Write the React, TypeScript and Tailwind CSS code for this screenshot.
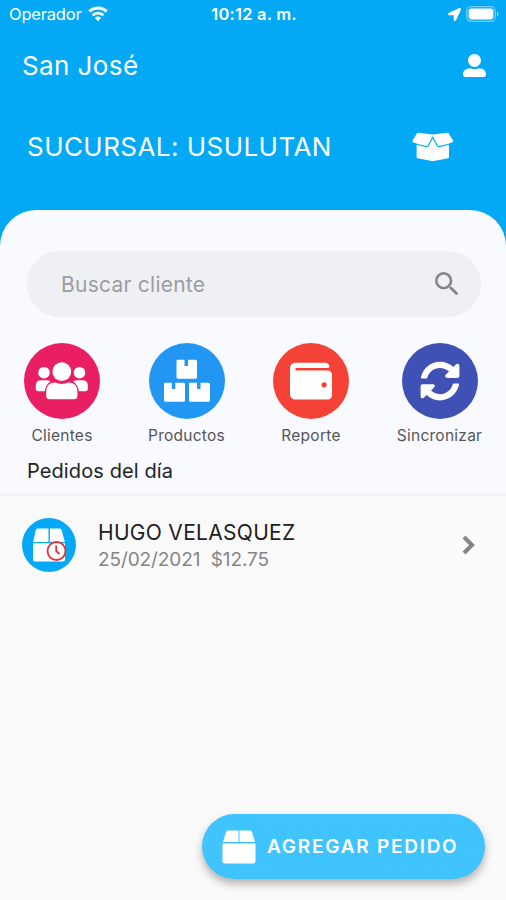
import type { ReactNode } from "react";
import { FaLocationArrow, FaSyncAlt, FaUserAlt, FaWallet } from "react-icons/fa";
import { MdSearch } from "react-icons/md";

function UsersIcon() {
  return (
    <svg width="76" height="76" viewBox="0 0 76 76" fill="white">
      <circle cx="20" cy="29.700" r="5.800" />
      <circle cx="55.500" cy="29.700" r="5.800" />
      <circle cx="37.800" cy="28.700" r="9.400" />
      <path d="M17 37.200H22.500Q25 37.200 26.400 38.600Q21.800 41.500 20.700 48.300H14.500Q11.700 48.300 11.700 45.500V43Q11.700 37.200 17 37.200Z" />
      <path d="M58.600 37.200H53.100Q50.600 37.200 49.200 38.600Q53.800 41.500 54.900 48.300H61.100Q63.900 48.300 63.900 45.500V43Q63.900 37.200 58.600 37.200Z" />
      <path d="M31.500 39.600Q34 41 37.800 41Q41.600 41 44.100 39.600Q53.400 39.600 53.400 49V52.700Q53.400 56.200 50 56.200H25.600Q22.200 56.200 22.200 52.700V49Q22.200 39.600 31.500 39.600Z" />
    </svg>
  );
}

function BoxesIcon() {
  return (
    <svg width="76" height="76" viewBox="0 0 76 76" fill="white">
      <path d="M28.500 16.700H35.500V23H39V16.700H46.500Q48 16.700 48 18.200V34.200Q48 35.700 46.500 35.700H29Q27.500 35.700 27.500 34.200V18Q27.500 16.700 28.500 16.700Z" />
      <path d="M16 39.700H22.800V46H26.300V39.700H34.500Q36 39.700 36 41.200V57.200Q36 58.700 34.500 58.700H16.500Q15 58.700 15 57.200V41Q15 39.700 16 39.700Z" />
      <path d="M41 39.700H48V46H51.500V39.700H59.500Q61 39.700 61 41.200V57.200Q61 58.700 59.500 58.700H41.500Q40 58.700 40 57.200V41Q40 39.700 41 39.700Z" />
    </svg>
  );
}

function OpenBoxIcon() {
  return (
    <svg width="42" height="30" viewBox="0 0 42 30">
      <path
        d="M5 1.200Q5.500.6 6.300.7L20.800 2.500 35.300.7Q36.100.6 36.600 1.200L41.200 8.800Q41.500 9.900 40.500 10.300L37 11.500V25.200Q37 26 36 26.300L21.800 29.100Q20.800 29.300 19.800 29.100L5.600 26.300Q4.600 26 4.600 25.200V11.500L1.100 10.300Q.1 9.900.4 8.800Z"
        fill="white"
      />
      <path
        d="M3.500 12 14.500 14.600Q15.600 14.800 16.200 13.800L20.700 5.500 25.300 13.800Q25.900 14.800 27 14.600L38.100 12"
        fill="none"
        stroke="#03a9f4"
        strokeWidth="1.200"
      />
    </svg>
  );
}

const ACTIONS: { label: string; color: string; width: string; icon: ReactNode }[] = [
  {
    label: "Clientes",
    color: "bg-[#e91e63]",
    width: "w-[124px]",
    icon: <UsersIcon />,
  },
  {
    label: "Productos",
    color: "bg-[#2196f3]",
    width: "w-[125px]",
    icon: <BoxesIcon />,
  },
  {
    label: "Reporte",
    color: "bg-[#f44336]",
    width: "w-[124px]",
    icon: <FaWallet className="h-[42px] w-[42px]" />,
  },
  {
    label: "Sincronizar",
    color: "bg-[#3f51b5]",
    width: "w-[133px]",
    icon: <FaSyncAlt className="h-[40px] w-[40px]" />,
  },
];

function StatusBar() {
  return (
    <div className="relative flex h-[28px] items-center justify-between pl-[9px] pr-[7px]">
      <div className="flex items-center gap-[7px]">
        <span className="text-[16.5px] leading-none tracking-[-0.2px]">Operador</span>
        <svg width="20" height="16" viewBox="0 0 20 16" fill="none">
          <path d="M1.300 5.400a12.500 12.500 0 0 1 17.400 0" stroke="white" strokeWidth="3" />
          <path d="M4.600 9.200a7.800 7.800 0 0 1 10.800 0" stroke="white" strokeWidth="2.800" />
          <path d="M10 15.200 6.900 12a4.500 4.500 0 0 1 6.200 0Z" fill="white" />
        </svg>
      </div>
      <span className="absolute left-[254px] -translate-x-1/2 whitespace-nowrap text-[16.5px] font-semibold leading-none tracking-[0.2px]">
        10:12 a. m.
      </span>
      <div className="flex items-center gap-[5px]">
        <FaLocationArrow className="h-[13px] w-[13px]" />
        <svg width="33" height="16" viewBox="0 0 33 16" fill="none">
          <rect x=".7" y=".7" width="28.600" height="14.600" rx="4.500" stroke="white" strokeOpacity=".45" strokeWidth="1.300" />
          <rect x="2.600" y="2.600" width="24.800" height="10.800" rx="2.800" fill="white" />
          <path d="M31 5.500c2 .7 2 4.300 0 5Z" fill="white" fillOpacity=".5" />
        </svg>
      </div>
    </div>
  );
}

function PendingBox() {
  return (
    <div className="flex h-[54px] w-[54px] shrink-0 items-center justify-center rounded-full bg-[#03a9f4]">
      <svg width="36" height="36" viewBox="0 0 36 36" fill="none">
        <path d="M6.500 1.500H17.500V15H2.200L4.800 3Q5.200 1.500 6.500 1.500Z" fill="white" />
        <path d="M18.900 1.500H28.800Q30.200 1.500 30.600 3L33.900 15H18.900Z" fill="white" />
        <path d="M2 16.200H34V32.500Q34 34.500 32 34.500H4Q2 34.500 2 32.500Z" fill="white" />
        <circle cx="25.500" cy="24" r="9" fill="white" stroke="#e52f33" strokeWidth="1.800" />
        <path d="M25.200 18.500V24L28.600 27.200" stroke="#e52f33" strokeWidth="1.800" />
      </svg>
    </div>
  );
}

export default function App() {
  return (
    <div className="relative flex h-[900px] w-[506px] flex-col overflow-hidden bg-[#fafafa] font-['Inter',sans-serif]">
      <header className="h-[246px] shrink-0 bg-[#03a9f4] text-white">
        <StatusBar />
        <div className="flex h-[75px] items-center justify-between pl-[22px] pr-[20px]">
          <h1 className="text-[26px] leading-none tracking-[0.4px]">San José</h1>
          <FaUserAlt className="h-[23px] w-[23px]" />
        </div>
        <div className="flex h-[87px] items-center justify-between pl-[27px] pr-[52px]">
          <h2 className="text-[26px] leading-none tracking-[0.45px]">SUCURSAL: USULUTAN</h2>
          <OpenBoxIcon />
        </div>
      </header>

      <section className="-mt-[36px] h-[286px] shrink-0 rounded-t-[36px] border-b-2 border-[#f0f4f6] bg-[#f9faff] pt-[41px]">
        <div className="mx-[27px] flex h-[66px] w-[454px] items-center justify-between rounded-full bg-[#eff0f4] pl-[34px] pr-[18px]">
          <span className="text-[21px] leading-none tracking-[0.25px] text-[#9c9da1]">Buscar cliente</span>
          <MdSearch className="h-[32px] w-[32px] text-[#858689]" />
        </div>
        <div className="mt-[26px] flex">
          {ACTIONS.map((a) => (
            <div key={a.label} className={`flex flex-col items-center ${a.width}`}>
              <div className={`flex h-[76px] w-[76px] items-center justify-center rounded-full text-white ${a.color}`}>
                {a.icon}
              </div>
              <span className="mt-[8px] text-[15.5px] leading-[18px] tracking-[0.25px] text-[#555659]">{a.label}</span>
            </div>
          ))}
        </div>
        <h3 className="mt-[13px] pl-[27px] text-[20px] leading-[26px] tracking-[0.1px] text-[#222326]">Pedidos del día</h3>
      </section>

      <div className="flex h-[98px] shrink-0 items-center pl-[22px] pr-[28px]">
        <PendingBox />
        <div className="ml-[22px] flex-1 pt-[4px]">
          <div className="text-[21px] leading-[26px] tracking-[0.3px] text-[#202020]">HUGO VELASQUEZ</div>
          <div className="whitespace-pre text-[19px] leading-[28px] tracking-[-0.1px] text-[#858585]">25/02/2021  $12.75</div>
        </div>
        <svg width="18" height="24" viewBox="0 0 18 24" fill="none">
          <path d="m4 4 8 8-8 8" stroke="#858585" strokeWidth="4" />
        </svg>
      </div>

      <button className="absolute bottom-[21px] right-[21px] flex h-[65px] w-[283px] items-center rounded-full bg-[#40c4ff] pl-[20px] text-white shadow-[0_5px_9px_rgba(60,40,40,0.35)]">
        <svg width="34" height="34" viewBox="0 0 34 34" fill="white">
          <path d="M6 .5H16.500V12H1L4 2Q4.600.5 6 .5ZM17.500.5H28Q29.400.5 30 2L33 12H17.500ZM.5 13.500H33.500V31Q33.500 33.500 31 33.500H3Q.5 33.500.5 31Z" />
        </svg>
        <span className="ml-[11px] text-[19px] font-semibold leading-none tracking-[1.75px]">AGREGAR PEDIDO</span>
      </button>
    </div>
  );
}
